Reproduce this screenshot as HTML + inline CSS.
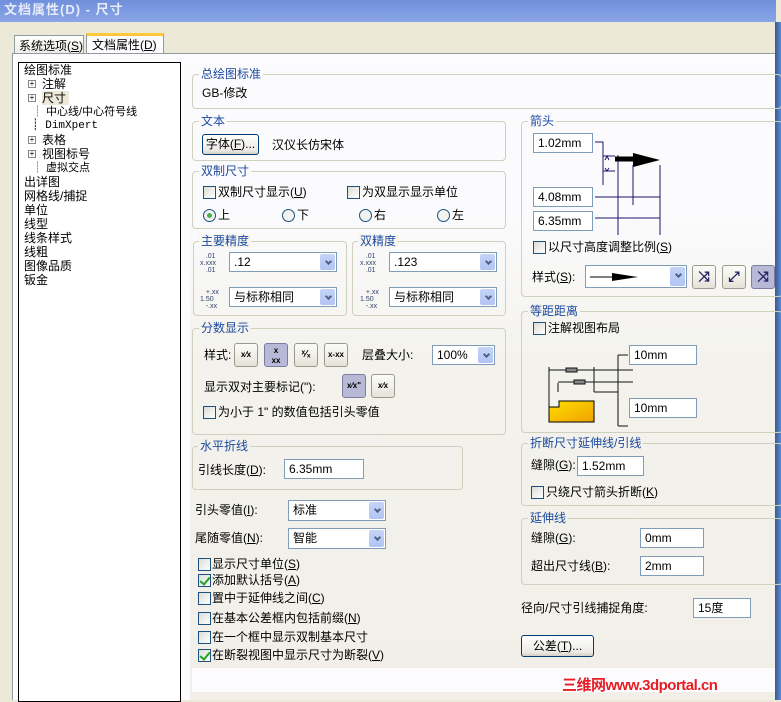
<!DOCTYPE html>
<html><head><meta charset="utf-8"><style>
*{box-sizing:border-box;margin:0;padding:0}
body{width:781px;height:700px;overflow:hidden;background:#ece9d8;font-family:"Liberation Sans","Noto Sans CJK SC",sans-serif;font-size:12px;color:#000;position:relative}
.a{position:absolute;white-space:nowrap;line-height:14px}
.title{left:0;top:0;width:776px;height:22px;background:linear-gradient(#6f8fdc,#8aa6e6);}
.title span{position:absolute;left:4px;top:3px;font-weight:bold;font-size:13px;color:#e8ecf8;letter-spacing:1px}
.grp{position:absolute;border:1px solid #d0d0bf;border-radius:4px}
.lab{position:absolute;color:#1d4aa0;background:inherit;padding:0 2px;line-height:14px;white-space:nowrap}
.inp{position:absolute;background:#fff;border:1px solid #7f9db9;padding-left:4px;line-height:18px;white-space:nowrap}
.sel{position:absolute;background:#fff;border:1px solid #7f9db9;padding-left:4px;line-height:18px;white-space:nowrap}
.sel:after{content:"";position:absolute;right:1px;top:1px;bottom:1px;width:15px;background:linear-gradient(#c6d3f7,#b1c4f4);border-radius:2px}
.sel i{position:absolute;right:5px;top:6px;width:5px;height:5px;border-right:2px solid #4d6185;border-bottom:2px solid #4d6185;transform:rotate(45deg);z-index:2}
.cb{position:absolute;width:13px;height:13px;border:1px solid #1c5180;background:linear-gradient(135deg,#dcdcd6,#fff)}
.cb.on:after{content:"";position:absolute;left:3px;top:0px;width:4px;height:8px;border-right:2px solid #21a121;border-bottom:2px solid #21a121;transform:rotate(40deg)}
.rb{position:absolute;width:13px;height:13px;border:1px solid #1c5180;border-radius:50%;background:#f2f2ee}
.rb.on:after{content:"";position:absolute;left:3px;top:3px;width:5px;height:5px;border-radius:50%;background:#4cb04c}
.btn{position:absolute;border:1px solid #003c74;border-radius:3px;background:linear-gradient(#fff,#ecebe6 80%,#d6d0c5);text-align:center;line-height:19px;white-space:nowrap}
.ib{position:absolute;width:24px;height:24px;border:1px solid #9c9a8f;border-radius:3px;background:linear-gradient(#fcfcf9,#e5e3d8);font-size:8px;text-align:center;line-height:22px;font-weight:bold}
.ib.on{background:#b8b9d6;border-color:#7e7da0}
u{text-decoration:underline}
</style></head><body>
<div class="a title"><span>文档属性(D) - 尺寸</span></div>
<!-- tabs -->
<div class="a" style="left:14px;top:35px;width:70px;height:19px;border:1px solid #919b9c;border-bottom:none;background:linear-gradient(#fff,#ecebe6);padding:3px 4px 0;line-height:14px">系统选项(<u>S</u>)</div>
<div class="a" style="left:86px;top:33px;width:78px;height:21px;border:1px solid #919b9c;border-top:3px solid #ffc83c;border-bottom:none;background:#fcfcfe;padding:2px 5px;line-height:14px">文档属性(<u>D</u>)</div>
<div class="a" style="left:12px;top:53px;width:764px;height:647px;background:#fcfcfe;border:1px solid #919b9c;border-bottom:none"></div>
<!-- scrollbar edge -->
<div class="a" style="left:775px;top:22px;width:6px;height:678px;background:linear-gradient(90deg,#3c5a8a,#5a8ad8)"></div>
<!-- tree -->
<div class="a" style="left:18px;top:62px;width:163px;height:640px;background:#fff;border:1px solid #000"></div>
<div class="a" style="left:24px;top:63px;line-height:14px">绘图标准</div>
<div class="a" style="left:28px;top:80px;width:8px;height:8px;border:1px solid #888;font-size:8px;line-height:6px;text-align:center">+</div><div class="a" style="left:42px;top:77px">注解</div>
<div class="a" style="left:28px;top:94px;width:8px;height:8px;border:1px solid #888;font-size:8px;line-height:6px;text-align:center">+</div><div class="a" style="left:42px;top:91px;background:#ece9d8;padding-right:3px">尺寸</div>
<div class="a" style="left:32px;top:105px;line-height:14px;font-size:11px">┊ 中心线/中心符号线</div>
<div class="a" style="left:32px;top:119px;font-family:'Liberation Mono',monospace;font-size:11px">┊ DimXpert</div>
<div class="a" style="left:28px;top:136px;width:8px;height:8px;border:1px solid #888;font-size:8px;line-height:6px;text-align:center">+</div><div class="a" style="left:42px;top:133px">表格</div>
<div class="a" style="left:28px;top:150px;width:8px;height:8px;border:1px solid #888;font-size:8px;line-height:6px;text-align:center">+</div><div class="a" style="left:42px;top:147px">视图标号</div>
<div class="a" style="left:32px;top:161px;font-size:11px">┊ 虚拟交点</div>
<div class="a" style="left:24px;top:175px">出详图</div>
<div class="a" style="left:24px;top:189px">网格线/捕捉</div>
<div class="a" style="left:24px;top:203px">单位</div>
<div class="a" style="left:24px;top:217px">线型</div>
<div class="a" style="left:24px;top:231px">线条样式</div>
<div class="a" style="left:24px;top:245px">线粗</div>
<div class="a" style="left:24px;top:259px">图像品质</div>
<div class="a" style="left:24px;top:273px">钣金</div>
<!-- content bg -->
<div class="a" style="left:190px;top:64px;width:585px;height:636px;background:linear-gradient(#fbfbfd 0,#fbfbfd 150px,#f3f2ec 300px,#f1efe8)"></div>
<div class="a" style="left:192px;top:668px;width:583px;height:24px;background:#fcfcfe"></div>

<!-- 总绘图标准 -->
<div class="grp" style="left:192px;top:74px;width:590px;height:35px"></div>
<div class="lab" style="left:199px;top:67px;background:#fbfbfd">总绘图标准</div>
<div class="a" style="left:202px;top:86px">GB-修改</div>
<!-- 文本 -->
<div class="grp" style="left:192px;top:121px;width:314px;height:40px"></div>
<div class="lab" style="left:199px;top:114px;background:#fbfbfd">文本</div>
<div class="btn" style="left:202px;top:134px;width:57px;height:21px">字体(<u>F</u>)...</div>
<div class="a" style="left:272px;top:138px">汉仪长仿宋体</div>
<!-- 双制尺寸 -->
<div class="grp" style="left:192px;top:171px;width:314px;height:58px"></div>
<div class="lab" style="left:199px;top:164px;background:#fbfbfd">双制尺寸</div>
<div class="cb" style="left:203px;top:186px"></div><div class="a" style="left:218px;top:185px">双制尺寸显示(<u>U</u>)</div>
<div class="cb" style="left:347px;top:186px"></div><div class="a" style="left:362px;top:185px">为双显示显示单位</div>
<div class="rb on" style="left:203px;top:209px"></div><div class="a" style="left:218px;top:208px">上</div>
<div class="rb" style="left:282px;top:209px"></div><div class="a" style="left:297px;top:208px">下</div>
<div class="rb" style="left:359px;top:209px"></div><div class="a" style="left:374px;top:208px">右</div>
<div class="rb" style="left:437px;top:209px"></div><div class="a" style="left:452px;top:208px">左</div>
<!-- 主要精度 -->
<div class="grp" style="left:193px;top:241px;width:154px;height:75px"></div>
<div class="lab" style="left:199px;top:234px;background:#f7f6f1">主要精度</div>
<div class="a" style="left:200px;top:253px;font-size:7px;line-height:7px;color:#346">&nbsp;&nbsp;&nbsp;.01<br>x.xxx<br>&nbsp;&nbsp;&nbsp;.01</div>
<div class="sel" style="left:229px;top:252px;width:108px;height:20px">.12<i></i></div>
<div class="a" style="left:200px;top:289px;font-size:7px;line-height:7px;color:#346">&nbsp;&nbsp;&nbsp;+.xx<br>1.50<br>&nbsp;&nbsp;&nbsp;-.xx</div>
<div class="sel" style="left:229px;top:287px;width:108px;height:20px">与标称相同<i></i></div>
<!-- 双精度 -->
<div class="grp" style="left:352px;top:241px;width:154px;height:75px"></div>
<div class="lab" style="left:358px;top:234px;background:#f7f6f1">双精度</div>
<div class="a" style="left:360px;top:253px;font-size:7px;line-height:7px;color:#346">&nbsp;&nbsp;&nbsp;.01<br>x.xxx<br>&nbsp;&nbsp;&nbsp;.01</div>
<div class="sel" style="left:389px;top:252px;width:108px;height:20px">.123<i></i></div>
<div class="a" style="left:360px;top:289px;font-size:7px;line-height:7px;color:#346">&nbsp;&nbsp;&nbsp;+.xx<br>1.50<br>&nbsp;&nbsp;&nbsp;-.xx</div>
<div class="sel" style="left:389px;top:287px;width:108px;height:20px">与标称相同<i></i></div>
<!-- 分数显示 -->
<div class="grp" style="left:192px;top:328px;width:314px;height:107px"></div>
<div class="lab" style="left:199px;top:321px;background:#f4f3ed">分数显示</div>
<div class="a" style="left:204px;top:348px">样式:</div>
<div class="ib" style="left:234px;top:343px">x⁄x</div>
<div class="ib on" style="left:264px;top:343px;line-height:10px;padding-top:2px">x<br>xx</div>
<div class="ib" style="left:294px;top:343px;font-size:10px">ˣ⁄ₓ</div>
<div class="ib" style="left:324px;top:343px">x-xx</div>
<div class="a" style="left:362px;top:348px">层叠大小:</div>
<div class="sel" style="left:432px;top:345px;width:63px;height:20px">100%<i></i></div>
<div class="a" style="left:204px;top:380px">显示双对主要标记("):</div>
<div class="ib on" style="left:342px;top:374px">x⁄x"</div>
<div class="ib" style="left:371px;top:374px">x⁄x</div>
<div class="cb" style="left:203px;top:406px"></div><div class="a" style="left:218px;top:405px">为小于 1" 的数值包括引头零值</div>
<!-- 水平折线 -->
<div class="grp" style="left:192px;top:446px;width:271px;height:44px"></div>
<div class="lab" style="left:198px;top:439px;background:#f2f1eb">水平折线</div>
<div class="a" style="left:198px;top:463px">引线长度(<u>D</u>):</div>
<div class="inp" style="left:284px;top:459px;width:80px;height:20px">6.35mm</div>
<!-- 零值 -->
<div class="a" style="left:195px;top:503px">引头零值(<u>I</u>):</div>
<div class="sel" style="left:288px;top:500px;width:98px;height:21px">标准<i></i></div>
<div class="a" style="left:195px;top:531px">尾随零值(<u>N</u>):</div>
<div class="sel" style="left:288px;top:528px;width:98px;height:21px">智能<i></i></div>
<div class="cb" style="left:198px;top:558px"></div><div class="a" style="left:212px;top:557px">显示尺寸单位(<u>S</u>)</div>
<div class="cb on" style="left:198px;top:574px"></div><div class="a" style="left:212px;top:573px">添加默认括号(<u>A</u>)</div>
<div class="cb" style="left:198px;top:592px"></div><div class="a" style="left:212px;top:591px">置中于延伸线之间(<u>C</u>)</div>
<div class="cb" style="left:198px;top:612px"></div><div class="a" style="left:212px;top:611px">在基本公差框内包括前缀(<u>N</u>)</div>
<div class="cb" style="left:198px;top:631px"></div><div class="a" style="left:212px;top:630px">在一个框中显示双制基本尺寸</div>
<div class="cb on" style="left:198px;top:649px"></div><div class="a" style="left:212px;top:648px">在断裂视图中显示尺寸为断裂(<u>V</u>)</div>

<!-- 箭头 -->
<div class="grp" style="left:521px;top:121px;width:262px;height:176px"></div>
<div class="lab" style="left:528px;top:114px;background:#fbfbfd">箭头</div>
<div class="inp" style="left:533px;top:133px;width:60px;height:20px">1.02mm</div>
<div class="inp" style="left:533px;top:187px;width:60px;height:20px">4.08mm</div>
<div class="inp" style="left:533px;top:211px;width:60px;height:20px">6.35mm</div>
<svg class="a" style="left:595px;top:135px" width="80" height="100" viewBox="0 0 80 100" fill="none" stroke="#1c1470" stroke-width="1">
<path d="M0 7H8V50M0 62H65M0 83H65M8 21H20M8 36H20"/>
<path d="M23 20V100M38 30V70M65 30V100"/>
<path d="M20 24H38" stroke="#000" stroke-width="5"/><path d="M38 18L65 25L38 32Z" fill="#000" stroke="none"/>
<path d="M38 62H65M23 83H65" stroke-width="1"/><path d="M10 25L12 21L14 25M10 33L12 36L14 33"/>
</svg>
<div class="cb" style="left:533px;top:241px"></div><div class="a" style="left:548px;top:240px">以尺寸高度调整比例(<u>S</u>)</div>
<div class="a" style="left:532px;top:270px">样式(<u>S</u>):</div>
<div class="sel" style="left:585px;top:265px;width:102px;height:23px"><svg width="80" height="20" style="position:absolute;left:4px;top:1px"><path d="M0 10H26" stroke="#000"/><path d="M22 6L48 10L22 14Z" fill="#000"/></svg><i></i></div>
<div class="ib" style="left:692px;top:265px;font-size:14px;line-height:20px;color:#226">⤨</div>
<div class="ib" style="left:722px;top:265px;font-size:14px;line-height:20px;color:#226">⤢</div>
<div class="ib on" style="left:751px;top:265px;font-size:14px;line-height:20px;color:#226">⤨</div>
<!-- 等距距离 -->
<div class="grp" style="left:521px;top:311px;width:262px;height:122px"></div>
<div class="lab" style="left:528px;top:304px;background:#f5f4ee">等距距离</div>
<div class="cb" style="left:533px;top:322px"></div><div class="a" style="left:548px;top:321px">注解视图布局</div>
<div class="inp" style="left:629px;top:345px;width:68px;height:20px">10mm</div>
<div class="inp" style="left:629px;top:398px;width:68px;height:20px">10mm</div>
<svg class="a" style="left:548px;top:350px" width="85" height="80" fill="none" stroke="#111">
<path d="M1 17V72M46 17V42M10 33V42M1 20H46M10 32H46M70 5H80M70 5V76M70 76H80M46 42H70M46 32H85M46 20H85" stroke-width="1"/>
<rect x="18" y="18" width="11" height="4" fill="#888"/><rect x="26" y="30" width="11" height="4" fill="#888"/>
<defs><linearGradient id="g" x1="0" x2="1" y1="0" y2="1"><stop offset="0" stop-color="#ffe000"/><stop offset="1" stop-color="#f0a000"/></linearGradient></defs>
<path d="M1 72V57H11V51H46V72Z" fill="url(#g)" stroke="#000"/>
</svg>
<!-- 折断尺寸 -->
<div class="grp" style="left:521px;top:443px;width:262px;height:63px"></div>
<div class="lab" style="left:528px;top:436px;background:#f2f1eb">折断尺寸延伸线/引线</div>
<div class="a" style="left:531px;top:458px">缝隙(<u>G</u>):</div>
<div class="inp" style="left:577px;top:456px;width:67px;height:20px">1.52mm</div>
<div class="cb" style="left:531px;top:486px"></div><div class="a" style="left:546px;top:485px">只绕尺寸箭头折断(<u>K</u>)</div>
<!-- 延伸线 -->
<div class="grp" style="left:521px;top:518px;width:262px;height:67px"></div>
<div class="lab" style="left:528px;top:511px;background:#f2f1eb">延伸线</div>
<div class="a" style="left:531px;top:531px">缝隙(<u>G</u>):</div>
<div class="inp" style="left:640px;top:528px;width:64px;height:20px">0mm</div>
<div class="a" style="left:531px;top:559px">超出尺寸线(<u>B</u>):</div>
<div class="inp" style="left:640px;top:556px;width:64px;height:20px">2mm</div>
<div class="a" style="left:521px;top:601px">径向/尺寸引线捕捉角度:</div>
<div class="inp" style="left:693px;top:598px;width:58px;height:20px">15度</div>
<div class="btn" style="left:521px;top:635px;width:73px;height:22px;line-height:20px">公差(<u>T</u>)...</div>
<div class="a" style="left:562px;top:677px;color:#e81c24;font-weight:bold;font-size:15px;line-height:18px;letter-spacing:-0.5px;text-shadow:1px 1px 0 #fff,-1px -1px 0 #fff">三维网www.3dportal.cn</div>
</body></html>
